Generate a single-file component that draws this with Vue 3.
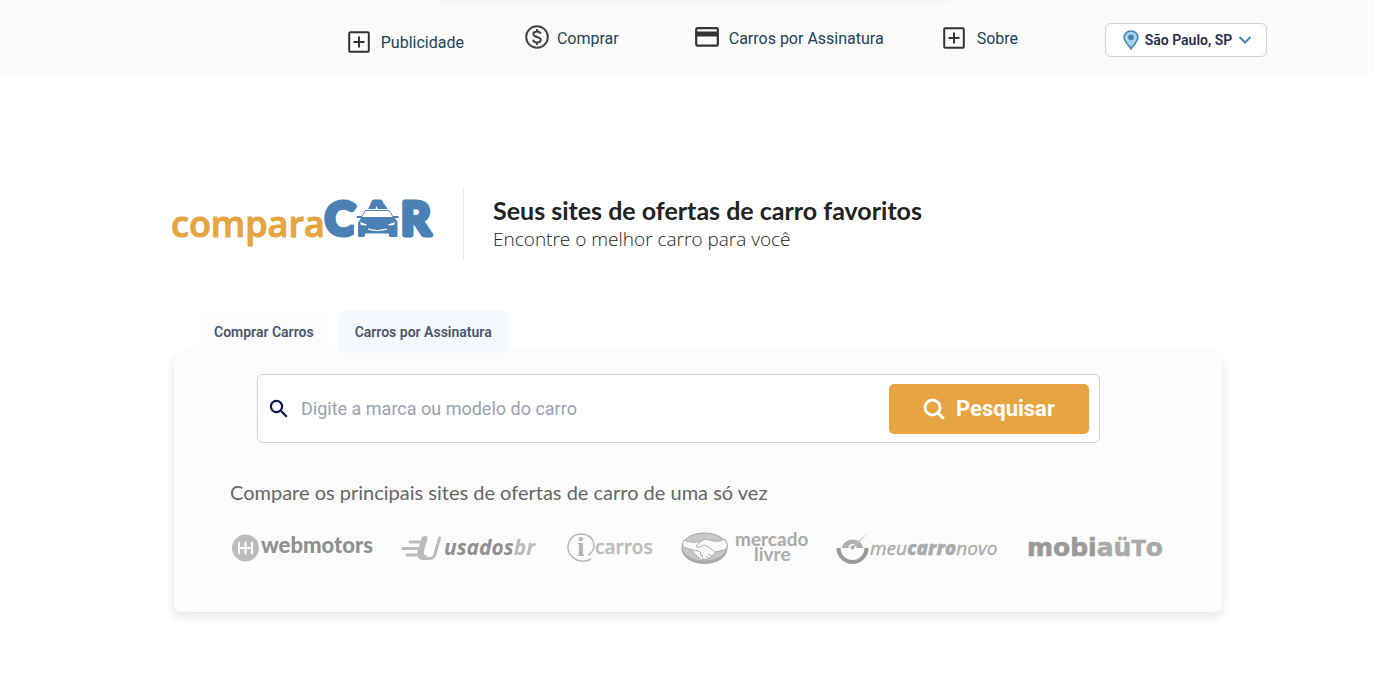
<script setup>
import { ref } from 'vue'

const query = ref('')
</script>

<template>
  <div class="page">
    <header class="header">
      <div class="glow"></div>
      <nav class="nav">
        <a class="item first" href="#">
          <svg width="22" height="22" viewBox="0 0 22 22" fill="none" stroke="#333" stroke-width="2">
            <rect x="1.2" y="1.2" width="19.6" height="19.6" rx="1" /><path d="M11 5.5v11M5.5 11h11" />
          </svg>
          <span>Publicidade</span>
        </a>
        <a class="item second" href="#">
          <svg width="24" height="26" viewBox="0 0 24 26" fill="none" stroke="#444" stroke-width="2">
            <circle cx="12" cy="12" r="10.8" />
            <path d="M15.6 8.8C15.2 7.2 13.8 6.5 12 6.5c-2 0-3.6 1-3.6 2.7 0 3.9 7.4 1.8 7.4 5.6 0 1.7-1.7 2.7-3.8 2.7-2.2 0-3.7-1-4-2.8M12 4v3M12 17v3" />
          </svg>
          <span>Comprar</span>
        </a>
        <a class="item third" href="#">
          <svg width="24" height="22" viewBox="0 0 24 22">
            <rect x="1.2" y="1.2" width="21.6" height="17.4" rx="1.4" fill="none" stroke="#333" stroke-width="2.2" />
            <path d="M1 4.5h22v5H1z" fill="#333" />
          </svg>
          <span>Carros por Assinatura</span>
        </a>
        <a class="item fourth" href="#">
          <svg width="22" height="22" viewBox="0 0 22 22" fill="none" stroke="#333" stroke-width="2">
            <rect x="1.2" y="1.2" width="19.6" height="19.6" rx="1" /><path d="M11 5.5v11M5.5 11h11" />
          </svg>
          <span>Sobre</span>
        </a>
      </nav>
      <button class="city" type="button">
        <svg width="16" height="20" viewBox="0 0 16 20">
          <path d="M8 1C4 1 1.2 3.9 1.2 7.6 1.2 11.5 5 14.5 8 18.8c3-4.3 6.8-7.3 6.8-11.2C14.8 3.9 12 1 8 1z" fill="#a5d5ef" stroke="#4a86b4" stroke-width="1.6" />
          <circle cx="8" cy="7.3" r="2.9" fill="#4a80ad" />
        </svg>
        <span>São Paulo, SP</span>
        <svg width="14" height="10" viewBox="0 0 14 10" fill="none" stroke="#4a86b4" stroke-width="2"><path d="M1.5 2l5.500 5.500L12.500 2" /></svg>
      </button>
    </header>

    <main class="main">
      <section class="hero">
        <svg class="logo" width="264" height="71" viewBox="0 0 264 71" role="img" aria-label="comparaCAR">
          <text class="compara" x="1" y="48">compara</text>
          <text class="car" x="155" y="46">C</text>
          <text class="car" x="191" y="46">A</text>
          <text class="car" x="231" y="46">R</text>
          <path d="M184 60V30l8-6 4-4h23l4 4 8 4v32z" fill="#fff" />
          <path d="M198 20l4-5h12l4 5z" fill="#4a80b4" />
          <path d="M195.500 21.500h23.500l4.500 7h-32.500z" fill="#fff" stroke="#4a80b4" stroke-width="1" />
          <path d="M205 21l1.500-4 1.500 4z" fill="#fff" />
          <path d="M186.500 27h5l1 2h30l1-2h5l.5 2h-4l2.500 4v13.500q0 1.500-1.500 1.500h-5.500q-1.500 0-1.500-2v-1.500h-24V46q0 2-1.500 2h-4q-1.500 0-1.500-1.500V34l3-5h-4z" fill="#4a80b4" />
          <path d="M190 33l7 2.500-1 1-5-.5zM225 33l-7 2.500 1 1 5-.5z" fill="#fff" />
          <path d="M198 40q9.500 3.500 19 0-9.500 3-19 0z" fill="#fff" stroke="#fff" stroke-width=".8" />
        </svg>
        <div class="headline">
          <h1>Seus sites de ofertas de carro favoritos</h1>
          <p>Encontre o melhor carro para você</p>
        </div>
      </section>

      <div class="tabs" role="tablist">
        <button class="tab" type="button" role="tab" aria-selected="true">Comprar Carros</button>
        <button class="tab blue" type="button" role="tab" aria-selected="false">Carros por Assinatura</button>
      </div>

      <section class="card">
        <form class="search" @submit.prevent>
          <label for="query" aria-label="Marca ou modelo">
            <svg width="20" height="20" viewBox="0 0 20 20" fill="none" stroke="#0b1554" stroke-width="2.2">
              <circle cx="7.5" cy="7.5" r="5.6" /><path d="M11.800 11.800l6 6" />
            </svg>
          </label>
          <input id="query" v-model="query" type="text" placeholder="Digite a marca ou modelo do carro" />
          <button class="submit" type="submit">
            <svg width="22" height="22" viewBox="0 0 22 22" fill="none" stroke="#fff" stroke-width="3">
              <circle cx="9.5" cy="9.5" r="7.5" /><path d="M14.800 14.800l6 6" />
            </svg>
            <span>Pesquisar</span>
          </button>
        </form>

        <p class="lead">Compare os principais sites de ofertas de carro de uma só vez</p>

        <div class="brands">
          <svg width="141" height="40" viewBox="0 0 141 40" role="img" aria-label="webmotors">
            <circle cx="13.5" cy="20" r="13.5" fill="#bbb" />
            <path d="M7 14.500v11M13.500 14.500v11M20 14.500v11M7 20h13" stroke="#fff" stroke-width="2" stroke-linecap="round" />
            <text class="webmotors" x="29" y="25">webmotors</text>
          </svg>
          <svg width="138" height="40" viewBox="0 0 138 40" role="img" aria-label="usadosbr">
            <g fill="none" stroke="#bbb" stroke-width="3" stroke-linecap="round" stroke-linejoin="round">
              <path d="M9 14h10M2 20.500h15M6 27h11" />
              <path d="M24 10h-2l-4 14q-1 6.500 4 6.500h7q4 0 5-4.500L38.500 10" />
              <path d="M24.500 10l-3.500 13q-1 5 3 6" stroke-width="4" />
            </g>
            <text class="usados" x="43" y="27">usados<tspan class="pale">br</tspan></text>
          </svg>
          <svg width="86" height="40" viewBox="0 0 86 40" role="img" aria-label="icarros">
            <path d="M24 31Q17 35 10 32 0 27 1 18 3 6 15 6q11 1 12 11 0 7-6 10" fill="none" stroke="#b8b8b8" stroke-width="1.5" />
            <text class="info" x="10" y="28">i</text>
            <text class="carros" x="28" y="26">carros</text>
          </svg>
          <svg width="128" height="40" viewBox="0 0 128 40" role="img" aria-label="mercado livre">
            <ellipse cx="23.5" cy="20.5" rx="23" ry="15.5" fill="#aaa" />
            <ellipse cx="23.5" cy="19" rx="22.5" ry="14" fill="#c8c8c8" stroke="#aaa" />
            <path d="M3 12q9 4 17 1 4-3 9-1 7 3 15-1l2.500 6q0 3-3 5l-9 2q0 3-3 3-1 4-4 3-2 3-5 1-2 2-4-1-3 0-3-3-4-1-4-5L2 19q-1-4 1-7z" fill="#fafafa" stroke="#aaa" />
            <path d="M20 13l-5 5q2 3 8-1 3 0 12 8M27 26l5 3M25 28l3 3" fill="none" stroke="#aaa" />
            <path d="M11.500 23q1-3 3 0 2-2 3 1 3-1 2 3 3 0 2 3" fill="none" stroke="#aaa" />
            <text class="mercado" x="54" y="18">mercado</text>
            <text class="mercado" x="73" y="33">livre</text>
          </svg>
          <svg width="163" height="40" viewBox="0 0 163 40" role="img" aria-label="meucarronovo">
            <path d="M4.500 20a11.500 12 0 0 1 22 0h-7a4 4 0 0 0-8 0z" fill="#b0b0b0" />
            <path d="M1.500 20A14 14 0 1 0 29.500 20" fill="none" stroke="#999" stroke-width="4" />
            <path d="M15 18.500L31 5 16.500 20z" fill="#bbb" />
            <circle cx="15.5" cy="19.5" r="2" fill="#aaa" />
            <text class="meu" x="33" y="27">meu<tspan class="heavy">carro</tspan>novo</text>
          </svg>
          <svg width="139" height="40" viewBox="0 0 139 40" role="img" aria-label="mobiauto">
            <text class="mobi" x="-1" y="28">mobi<tspan class="light">aü<tspan class="tee">T</tspan>o</tspan></text>
          </svg>
        </div>
      </section>
    </main>
  </div>
</template>

<style>
body {
  margin: 0;
  background: #fff;
}
</style>

<style scoped>
.page {
  font-family: Roboto, "Liberation Sans", sans-serif;
}
.header {
  position: relative;
  display: flex;
  justify-content: flex-end;
  align-items: flex-start;
  height: 74px;
  margin: 0 1px;
  padding-right: 107px;
  background: #fbfbfb;
  box-sizing: border-box;
  overflow: hidden;
}
.glow {
  position: absolute;
  top: -12px;
  left: 32%;
  right: 31%;
  height: 8px;
  box-shadow: 0 2px 8px #e4e4e4;
}
.nav {
  display: flex;
  padding-top: 25px;
}
.item {
  display: flex;
  align-items: center;
  height: 26px;
  color: #1d4257;
  font-size: 16px;
  text-decoration: none;
  white-space: nowrap;
}
.first {
  gap: 11px;
  margin-top: 4px;
}
.second {
  gap: 8px;
  margin-left: 61px;
}
.third {
  gap: 10px;
  margin-left: 76px;
}
.fourth {
  gap: 12px;
  margin-left: 59px;
}
.city {
  display: flex;
  align-items: center;
  justify-content: center;
  gap: 6px;
  width: 162px;
  height: 34px;
  margin: 23px 0 0 87px;
  padding: 0 0 0 3px;
  border: 1px solid #cfd0da;
  border-radius: 6px;
  background: #fff;
  color: #25304d;
  font: 600 14px Roboto, sans-serif;
  white-space: nowrap;
}
.main {
  padding: 115px 153px 81px 174px;
}
.hero {
  display: flex;
  height: 71px;
  margin-left: -4px;
}
.logo {
  flex: none;
  overflow: visible;
}
.compara {
  font: 600 36px "Open Sans", sans-serif;
  fill: #e5a540;
  stroke: #e5a540;
  stroke-width: 1;
  stroke-linejoin: round;
}
.car {
  font: 700 46px Lato, sans-serif;
  fill: #4a80b4;
  stroke: #4a80b4;
  stroke-width: 5;
  stroke-linejoin: round;
}
.headline {
  margin-left: 29px;
  padding-left: 29px;
  border-left: 1px solid #e8e8e8;
  color: #222;
}
h1 {
  margin: 6px 0 0;
  font: 700 25px/30px Lato, sans-serif;
}
.headline p {
  margin: 0;
  font: 300 19px/28px "Open Sans", sans-serif;
}
.tabs {
  display: flex;
  gap: 9px;
  margin: 50px 0 0 24px;
}
.tab {
  height: 43px;
  padding: 0 16px;
  border: 0;
  border-radius: 6px 6px 0 0;
  background: #fcfcfc;
  color: #4a5671;
  font: 600 14px Roboto, sans-serif;
}
.tab.blue {
  background: #f4faff;
}
.card {
  padding: 21px 56px 44px;
  border-radius: 6px;
  background: #fcfcfc;
  box-shadow: 0 4px 10px rgba(60, 60, 120, 0.14);
}
.search {
  display: flex;
  align-items: center;
  height: 69px;
  margin: 0 66px 0 27px;
  padding: 0 10px;
  border: 1px solid #cfd0da;
  border-radius: 6px;
  background: #fff;
  box-sizing: border-box;
}
.search label {
  display: flex;
  margin-left: 1px;
}
.search input {
  flex: 1;
  min-width: 0;
  margin-left: 12px;
  padding: 0;
  border: 0;
  outline: 0;
  background: none;
  font: 18px Roboto, sans-serif;
}
.search input::placeholder {
  color: #9aa1b0;
}
.submit {
  display: flex;
  align-items: center;
  justify-content: center;
  gap: 11px;
  width: 200px;
  height: 50px;
  border: 0;
  border-radius: 5px;
  background: #e6a540;
  color: #fff;
  font: 700 22px Roboto, sans-serif;
}
.lead {
  margin: 35px 0 0;
  color: #666;
  font: 400 20px/28px Lato, sans-serif;
}
.brands {
  display: flex;
  gap: 28px;
  margin: 22px 0 0 2px;
}
.brands svg {
  flex: none;
  overflow: visible;
}
.webmotors {
  font: 900 22px Lato, sans-serif;
  fill: #909090;
}
.usados {
  font: italic 700 21px "Open Sans", sans-serif;
  fill: #909090;
}
.usados .pale {
  fill: #bbb;
}
.info {
  font: 700 27px "Liberation Serif", serif;
  fill: #b4b4b4;
}
.carros {
  font: 600 19px "Open Sans", sans-serif;
  fill: #bcbcbc;
  stroke: #bcbcbc;
  stroke-width: 0.4;
}
.mercado {
  font: 700 19px Lato, sans-serif;
  fill: #aaa;
}
.meu {
  font: italic 400 19px "Open Sans", sans-serif;
  fill: #aaa;
  stroke: #aaa;
  stroke-width: 0.3;
}
.heavy {
  font-weight: 800;
}
.mobi {
  font: 700 25px "DejaVu Sans", sans-serif;
  fill: #999;
  stroke: #999;
  stroke-width: 0.6;
  stroke-linejoin: round;
}
.light {
  fill: #aaa;
  stroke: #aaa;
}
.tee {
  font-size: 21px;
}
</style>
